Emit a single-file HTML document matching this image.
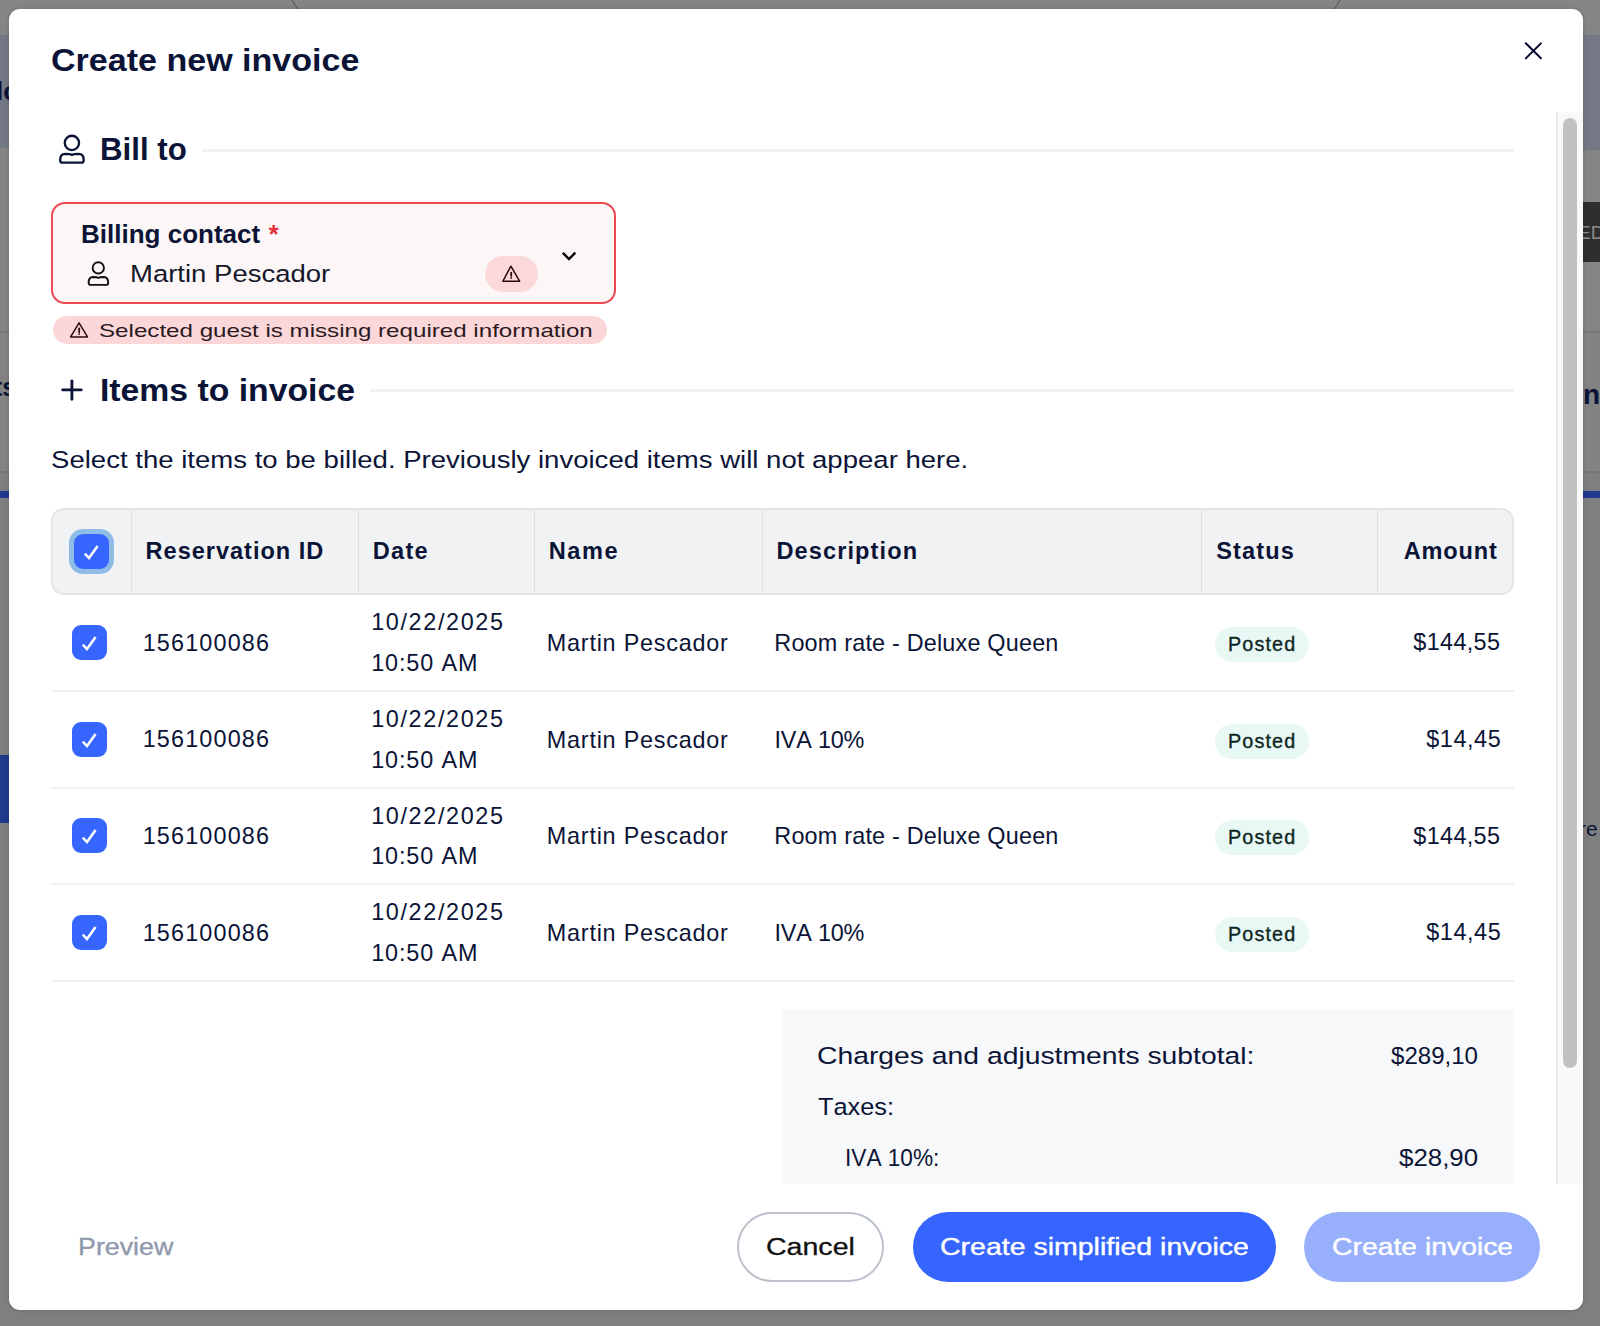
<!DOCTYPE html>
<html><head><meta charset="utf-8">
<style>
*{box-sizing:border-box;margin:0;padding:0}
html,body{width:1600px;height:1326px;overflow:hidden;background:#858585;font-family:"Liberation Sans",sans-serif;color:#0b1437;font-kerning:none}
.a{position:absolute}
.t{position:absolute;white-space:nowrap;line-height:1}
svg{position:absolute;overflow:visible}
</style></head><body>
<div class="a" style="left:0px;top:35px;width:9px;height:113px;background:#747884"></div>
<div class="a" style="left:1582px;top:35px;width:18px;height:115px;background:#747884"></div>
<div class="a" style="left:0px;top:332px;width:9px;height:140px;background:#838383"></div>
<div class="a" style="left:1582px;top:332px;width:18px;height:140px;background:#838383"></div>
<div class="a" style="left:0px;top:472px;width:1600px;height:854px;background:#7f7f7f"></div>
<div class="a" style="left:1582px;top:472px;width:18px;height:854px;background:#7f7f7f"></div>
<div class="a" style="left:1582px;top:202px;width:18px;height:60px;background:#2e2e2e"></div>
<div class="a" style="left:0px;top:331px;width:9px;height:1.5px;background:#767676"></div>
<div class="a" style="left:1582px;top:331px;width:18px;height:1.5px;background:#767676"></div>
<div class="a" style="left:0px;top:471px;width:9px;height:1.5px;background:#767676"></div>
<div class="a" style="left:1582px;top:471px;width:18px;height:1.5px;background:#767676"></div>
<div class="a" style="left:0px;top:490.5px;width:9px;height:7px;background:#1f3a8f"></div>
<div class="a" style="left:1582px;top:490.5px;width:18px;height:7px;background:#1f3a8f"></div>
<div class="a" style="left:0px;top:755px;width:9px;height:68px;background:#1e3a8a"></div>
<div class="t" style="left:-4px;top:78px;font-size:26px;font-weight:bold;color:#0b1437">lc</div>
<div class="t" style="left:-6px;top:375px;font-size:25px;font-weight:bold;color:#0b1437">ts</div>
<div class="t" style="left:1583px;top:381px;font-size:28px;font-weight:bold;color:#0b1437">n</div>
<div class="t" style="left:1578px;top:223px;font-size:19px;color:#8c8c8c">ED</div>
<div class="t" style="left:1579px;top:818px;font-size:21px;color:#0b1437">re</div>
<svg style="left:280px;top:-2px" width="1070" height="14" viewBox="280 -2 1070 14"><path d="M291.5 -1Q294.5 5 298.5 9.5M1340.5 -1Q1338 5 1333.5 9.5" stroke="#5a5e66" stroke-width="1.3" fill="none"/></svg>
<div class="a" style="left:9px;top:9px;width:1573.5px;height:1301px;background:#fff;border-radius:11px;box-shadow:0 0 5px rgba(0,0,0,.15)"></div>
<div class="t" style="left:50.60px;top:45.72px;font-size:30.81px;letter-spacing:0.000px;font-weight:bold;color:#0b1437;transform:scaleX(1.1054);transform-origin:0 0;">Create new invoice</div>
<svg style="left:1520px;top:38px" width="26" height="26" viewBox="1520 38 26 26"><path d="M1525.8 43.3L1540.9 58.3M1540.9 43.4L1525.8 58.4" stroke="#050a30" stroke-width="2" stroke-linecap="round" fill="none"/></svg>
<div class="a" style="left:1556px;top:112px;width:2px;height:1072px;background:#e8e8e8"></div>
<div class="a" style="left:1558px;top:112px;width:24.5px;height:1072px;background:#f9f9f9"></div>
<div class="a" style="left:1563px;top:118px;width:14px;height:950px;background:#c1c1c1;border-radius:7px"></div>
<svg style="left:50px;top:125px" width="50" height="50" viewBox="50 125 50 50"><circle cx="71.9" cy="142.9" r="7.15" stroke="#0b1437" stroke-width="2.3" fill="none"/><path d="M65.34 153.85 L69.59 154.20 L71.95 154.91 L74.31 154.20 L78.56 153.85 C82.57 153.85 83.75 157.37 83.75 160.19 Q83.75 162.65 81.39 162.65 L62.51 162.65 Q60.15 162.65 60.15 160.19 C60.15 157.37 61.33 153.85 65.34 153.85 Z" stroke="#0b1437" stroke-width="2.3" fill="none" stroke-linejoin="round"/></svg>
<div class="t" style="left:99.91px;top:133.41px;font-size:32.12px;letter-spacing:0.000px;font-weight:bold;color:#0b1437;transform:scaleX(0.9731);transform-origin:0 0;">Bill to</div>
<div class="a" style="left:202px;top:148.5px;width:1312px;height:3px;background:#f0f1f3;border-radius:2px"></div>
<div class="a" style="left:51px;top:202px;width:565px;height:101.5px;border:2px solid #ee4853;border-radius:14px;background:#fdf6f6"></div>
<div class="t" style="left:81.46px;top:221.99px;font-size:25.29px;letter-spacing:0.000px;font-weight:bold;color:#0b1437;transform:scaleX(1.0288);transform-origin:0 0;">Billing contact</div>
<div class="t" style="left:268.63px;top:221.99px;font-size:25.29px;letter-spacing:0.000px;font-weight:bold;color:#e5333d;">*</div>
<svg style="left:80px;top:255px" width="40" height="40" viewBox="80 255 40 40"><circle cx="98.3" cy="267.9" r="5.65" stroke="#111" stroke-width="1.9" fill="none"/><path d="M92.94 276.95 L96.45 277.27 L98.40 277.90 L100.35 277.27 L103.86 276.95 C107.17 276.95 108.15 280.11 108.15 282.64 Q108.15 284.85 106.20 284.85 L90.60 284.85 Q88.65 284.85 88.65 282.64 C88.65 280.11 89.62 276.95 92.94 276.95 Z" stroke="#111" stroke-width="1.9" fill="none" stroke-linejoin="round"/></svg>
<div class="t" style="left:129.74px;top:262.77px;font-size:23.55px;letter-spacing:0.000px;font-weight:normal;color:#15172a;transform:scaleX(1.1679);transform-origin:0 0;">Martin Pescador</div>
<div class="a" style="left:485px;top:256px;width:53px;height:35.5px;border-radius:18px;background:#fbd9db"></div>
<svg style="left:495px;top:258px" width="32" height="32" viewBox="495 258 32 32"><path d="M510.9 266.2L519.7 281.3H502.8Z" stroke="#2b0a10" stroke-width="1.5" fill="none" stroke-linejoin="round"/><path d="M511.2 272.6V275.8" stroke="#2b0a10" stroke-width="1.8" stroke-linecap="round"/><circle cx="511.2" cy="277.9" r="0.95" fill="#2b0a10"/></svg>
<svg style="left:552px;top:242px" width="32" height="26" viewBox="552 242 32 26"><path d="M562.8 252.8L569 259.1L575.3 252.7" stroke="#000" stroke-width="2.4" fill="none"/></svg>
<div class="a" style="left:52.75px;top:316px;width:553.85px;height:27.75px;border-radius:14px;background:#fbd7d9"></div>
<svg style="left:64px;top:316px" width="32" height="30" viewBox="64 316 32 30"><path d="M79.05 322.9L87.5 336.9H70.6Z" stroke="#2b0a10" stroke-width="1.5" fill="none" stroke-linejoin="round"/><path d="M79.2 328.5V332.2" stroke="#2b0a10" stroke-width="1.8" stroke-linecap="round"/><circle cx="79.2" cy="334.1" r="0.9" fill="#2b0a10"/></svg>
<div class="t" style="left:98.50px;top:321.72px;font-size:18.17px;letter-spacing:0.000px;font-weight:normal;color:#2a1a1f;transform:scaleX(1.3295);transform-origin:0 0;">Selected guest is missing required information</div>
<svg style="left:56px;top:374px" width="32" height="32" viewBox="56 374 32 32"><path d="M71.9 381V399.3M62.7 389.9H81.2" stroke="#0b1437" stroke-width="2.9" stroke-linecap="round"/></svg>
<div class="t" style="left:99.74px;top:374.82px;font-size:31.40px;letter-spacing:0.000px;font-weight:bold;color:#0b1437;transform:scaleX(1.0748);transform-origin:0 0;">Items to invoice</div>
<div class="a" style="left:370px;top:388.5px;width:1144px;height:3px;background:#f0f1f3;border-radius:2px"></div>
<div class="t" style="left:50.75px;top:449.07px;font-size:23.55px;letter-spacing:0.000px;font-weight:normal;color:#0b1437;transform:scaleX(1.1700);transform-origin:0 0;">Select the items to be billed. Previously invoiced items will not appear here.</div>
<div class="a" style="left:51px;top:507.5px;width:1463px;height:87.5px;border:2px solid #e3e5e8;border-radius:13px;background:#f1f2f4"></div>
<div class="a" style="left:130.5px;top:510px;width:1.5px;height:83px;background:#dfe1e5"></div>
<div class="a" style="left:357.5px;top:510px;width:1.5px;height:83px;background:#dfe1e5"></div>
<div class="a" style="left:533.5px;top:510px;width:1.5px;height:83px;background:#dfe1e5"></div>
<div class="a" style="left:761.5px;top:510px;width:1.5px;height:83px;background:#dfe1e5"></div>
<div class="a" style="left:1200.5px;top:510px;width:1.5px;height:83px;background:#dfe1e5"></div>
<div class="a" style="left:1376.5px;top:510px;width:1.5px;height:83px;background:#dfe1e5"></div>
<div class="a" style="left:68.6px;top:528.8px;width:45.4px;height:45px;border-radius:14px;background:#8fbde8"></div>
<div class="a" style="left:74px;top:534px;width:35px;height:35px;border-radius:9px;background:#3766ff"></div>
<svg style="left:74px;top:534px" width="35" height="35" viewBox="0 0 35 35"><path d="M10.8 19.6L15 24L23.6 12" stroke="#fff" stroke-width="2.5" fill="none"/></svg>
<div class="t" style="left:145.62px;top:540.37px;font-size:23.55px;letter-spacing:0.975px;font-weight:bold;color:#0b1437;">Reservation ID</div>
<div class="t" style="left:372.82px;top:540.37px;font-size:23.55px;letter-spacing:1.281px;font-weight:bold;color:#0b1437;">Date</div>
<div class="t" style="left:548.72px;top:540.37px;font-size:23.55px;letter-spacing:1.616px;font-weight:bold;color:#0b1437;">Name</div>
<div class="t" style="left:776.52px;top:540.37px;font-size:23.55px;letter-spacing:1.101px;font-weight:bold;color:#0b1437;">Description</div>
<div class="t" style="left:1216.22px;top:540.37px;font-size:23.55px;letter-spacing:1.156px;font-weight:bold;color:#0b1437;">Status</div>
<div class="t" style="left:1403.71px;top:540.37px;font-size:23.55px;letter-spacing:0.828px;font-weight:bold;color:#0b1437;">Amount</div>
<div class="a" style="left:72px;top:625.0px;width:35px;height:35px;border-radius:9px;background:#3766ff"></div>
<svg style="left:72px;top:625.0px" width="35" height="35" viewBox="0 0 35 35"><path d="M10.8 19.6L15 24L23.6 12" stroke="#fff" stroke-width="2.5" fill="none"/></svg>
<div class="t" style="left:142.72px;top:631.79px;font-size:23.40px;letter-spacing:1.147px;font-weight:normal;color:#0b1437;">156100086</div>
<div class="t" style="left:371.22px;top:611.49px;font-size:23.40px;letter-spacing:1.627px;font-weight:normal;color:#0b1437;">10/22/2025</div>
<div class="t" style="left:371.22px;top:651.99px;font-size:23.40px;letter-spacing:0.863px;font-weight:normal;color:#0b1437;">10:50 AM</div>
<div class="t" style="left:546.83px;top:631.99px;font-size:23.40px;letter-spacing:0.763px;font-weight:normal;color:#0b1437;">Martin Pescador</div>
<div class="t" style="left:774.33px;top:631.99px;font-size:23.40px;letter-spacing:0.197px;font-weight:normal;color:#0b1437;">Room rate - Deluxe Queen</div>
<div class="a" style="left:1214.5px;top:627.0px;width:94.5px;height:35px;border-radius:18px;background:#e8f8f5"></div>
<div class="t" style="left:1227.98px;top:635.07px;font-size:19.77px;letter-spacing:1.151px;font-weight:normal;color:#0d2622;-webkit-text-stroke:0.35px #0d2622">Posted</div>
<div class="t" style="left:1413.35px;top:631.49px;font-size:23.40px;letter-spacing:0.341px;font-weight:normal;color:#0b1437;">$144,55</div>
<div class="a" style="left:51px;top:690.0px;width:1463px;height:2px;background:#edf1f6"></div>
<div class="a" style="left:72px;top:721.6px;width:35px;height:35px;border-radius:9px;background:#3766ff"></div>
<svg style="left:72px;top:721.6px" width="35" height="35" viewBox="0 0 35 35"><path d="M10.8 19.6L15 24L23.6 12" stroke="#fff" stroke-width="2.5" fill="none"/></svg>
<div class="t" style="left:142.72px;top:728.39px;font-size:23.40px;letter-spacing:1.147px;font-weight:normal;color:#0b1437;">156100086</div>
<div class="t" style="left:371.22px;top:708.09px;font-size:23.40px;letter-spacing:1.627px;font-weight:normal;color:#0b1437;">10/22/2025</div>
<div class="t" style="left:371.22px;top:748.59px;font-size:23.40px;letter-spacing:0.863px;font-weight:normal;color:#0b1437;">10:50 AM</div>
<div class="t" style="left:546.83px;top:728.59px;font-size:23.40px;letter-spacing:0.763px;font-weight:normal;color:#0b1437;">Martin Pescador</div>
<div class="t" style="left:774.44px;top:728.59px;font-size:23.40px;letter-spacing:-0.177px;font-weight:normal;color:#0b1437;">IVA 10%</div>
<div class="a" style="left:1214.5px;top:723.6px;width:94.5px;height:35px;border-radius:18px;background:#e8f8f5"></div>
<div class="t" style="left:1227.98px;top:731.67px;font-size:19.77px;letter-spacing:1.151px;font-weight:normal;color:#0d2622;-webkit-text-stroke:0.35px #0d2622">Posted</div>
<div class="t" style="left:1426.25px;top:728.09px;font-size:23.40px;letter-spacing:0.572px;font-weight:normal;color:#0b1437;">$14,45</div>
<div class="a" style="left:51px;top:786.6px;width:1463px;height:2px;background:#edf1f6"></div>
<div class="a" style="left:72px;top:818.2px;width:35px;height:35px;border-radius:9px;background:#3766ff"></div>
<svg style="left:72px;top:818.2px" width="35" height="35" viewBox="0 0 35 35"><path d="M10.8 19.6L15 24L23.6 12" stroke="#fff" stroke-width="2.5" fill="none"/></svg>
<div class="t" style="left:142.72px;top:824.99px;font-size:23.40px;letter-spacing:1.147px;font-weight:normal;color:#0b1437;">156100086</div>
<div class="t" style="left:371.22px;top:804.69px;font-size:23.40px;letter-spacing:1.627px;font-weight:normal;color:#0b1437;">10/22/2025</div>
<div class="t" style="left:371.22px;top:845.19px;font-size:23.40px;letter-spacing:0.863px;font-weight:normal;color:#0b1437;">10:50 AM</div>
<div class="t" style="left:546.83px;top:825.19px;font-size:23.40px;letter-spacing:0.763px;font-weight:normal;color:#0b1437;">Martin Pescador</div>
<div class="t" style="left:774.33px;top:825.19px;font-size:23.40px;letter-spacing:0.197px;font-weight:normal;color:#0b1437;">Room rate - Deluxe Queen</div>
<div class="a" style="left:1214.5px;top:820.2px;width:94.5px;height:35px;border-radius:18px;background:#e8f8f5"></div>
<div class="t" style="left:1227.98px;top:828.27px;font-size:19.77px;letter-spacing:1.151px;font-weight:normal;color:#0d2622;-webkit-text-stroke:0.35px #0d2622">Posted</div>
<div class="t" style="left:1413.35px;top:824.69px;font-size:23.40px;letter-spacing:0.341px;font-weight:normal;color:#0b1437;">$144,55</div>
<div class="a" style="left:51px;top:883.2px;width:1463px;height:2px;background:#edf1f6"></div>
<div class="a" style="left:72px;top:914.8px;width:35px;height:35px;border-radius:9px;background:#3766ff"></div>
<svg style="left:72px;top:914.8px" width="35" height="35" viewBox="0 0 35 35"><path d="M10.8 19.6L15 24L23.6 12" stroke="#fff" stroke-width="2.5" fill="none"/></svg>
<div class="t" style="left:142.72px;top:921.59px;font-size:23.40px;letter-spacing:1.147px;font-weight:normal;color:#0b1437;">156100086</div>
<div class="t" style="left:371.22px;top:901.29px;font-size:23.40px;letter-spacing:1.627px;font-weight:normal;color:#0b1437;">10/22/2025</div>
<div class="t" style="left:371.22px;top:941.79px;font-size:23.40px;letter-spacing:0.863px;font-weight:normal;color:#0b1437;">10:50 AM</div>
<div class="t" style="left:546.83px;top:921.79px;font-size:23.40px;letter-spacing:0.763px;font-weight:normal;color:#0b1437;">Martin Pescador</div>
<div class="t" style="left:774.44px;top:921.79px;font-size:23.40px;letter-spacing:-0.177px;font-weight:normal;color:#0b1437;">IVA 10%</div>
<div class="a" style="left:1214.5px;top:916.8px;width:94.5px;height:35px;border-radius:18px;background:#e8f8f5"></div>
<div class="t" style="left:1227.98px;top:924.87px;font-size:19.77px;letter-spacing:1.151px;font-weight:normal;color:#0d2622;-webkit-text-stroke:0.35px #0d2622">Posted</div>
<div class="t" style="left:1426.25px;top:921.29px;font-size:23.40px;letter-spacing:0.572px;font-weight:normal;color:#0b1437;">$14,45</div>
<div class="a" style="left:51px;top:979.8px;width:1463px;height:2px;background:#edf1f6"></div>
<div class="a" style="left:782.5px;top:1009.5px;width:731.5px;height:174.5px;background:#f7f8fa"></div>
<div class="t" style="left:817.06px;top:1044.94px;font-size:23.69px;letter-spacing:0.000px;font-weight:normal;color:#0b1437;transform:scaleX(1.1950);transform-origin:0 0;">Charges and adjustments subtotal:</div>
<div class="t" style="left:1391.34px;top:1044.94px;font-size:23.69px;letter-spacing:0.000px;font-weight:normal;color:#0b1437;transform:scaleX(1.0159);transform-origin:0 0;">$289,10</div>
<div class="t" style="left:818.18px;top:1096.31px;font-size:23.26px;letter-spacing:0.000px;font-weight:normal;color:#0b1437;transform:scaleX(1.0894);transform-origin:0 0;">Taxes:</div>
<div class="t" style="left:845.16px;top:1146.94px;font-size:23.69px;letter-spacing:0.000px;font-weight:normal;color:#0b1437;transform:scaleX(0.9558);transform-origin:0 0;">IVA 10%:</div>
<div class="t" style="left:1399.32px;top:1146.94px;font-size:23.69px;letter-spacing:0.000px;font-weight:normal;color:#0b1437;transform:scaleX(1.0914);transform-origin:0 0;">$28,90</div>
<div class="t" style="left:78.30px;top:1234.51px;font-size:23.91px;letter-spacing:0.000px;font-weight:normal;color:#9099ad;transform:scaleX(1.1211);transform-origin:0 0;-webkit-text-stroke:0.35px #9099ad">Preview</div>
<div class="a" style="left:737.25px;top:1212px;width:146.5px;height:70px;border:2px solid #bcc2cc;border-radius:35px;background:#fff"></div>
<div class="t" style="left:766.25px;top:1234.51px;font-size:23.91px;letter-spacing:0.000px;font-weight:normal;color:#111;transform:scaleX(1.1939);transform-origin:0 0;-webkit-text-stroke:0.3px #111">Cancel</div>
<div class="a" style="left:912.5px;top:1212px;width:363.5px;height:70px;border-radius:35px;background:#3664ff"></div>
<div class="t" style="left:939.80px;top:1235.33px;font-size:24.42px;letter-spacing:0.000px;font-weight:normal;color:#fff;transform:scaleX(1.1675);transform-origin:0 0;-webkit-text-stroke:0.4px #fff">Create simplified invoice</div>
<div class="a" style="left:1304px;top:1212px;width:236px;height:70px;border-radius:35px;background:#98b0fc"></div>
<div class="t" style="left:1331.56px;top:1235.33px;font-size:24.42px;letter-spacing:0.000px;font-weight:normal;color:#fff;transform:scaleX(1.1609);transform-origin:0 0;-webkit-text-stroke:0.4px #fff">Create invoice</div>
</body></html>
